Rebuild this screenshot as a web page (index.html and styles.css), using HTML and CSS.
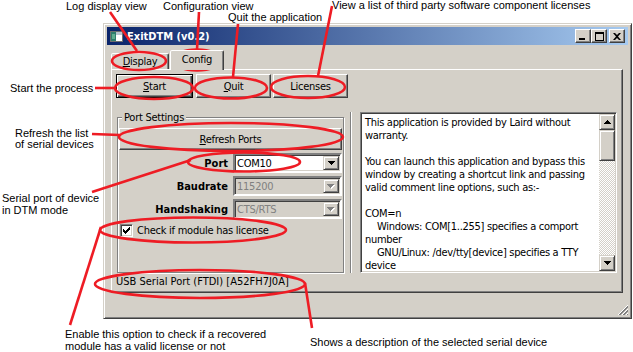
FILE: index.html
```html
<!DOCTYPE html>
<html>
<head>
<meta charset="utf-8">
<title>ExitDTM</title>
<link rel="stylesheet" href="styles.css">
</head>
<body>
<div class="canvas">
  <div class="window">
    <div class="titlebar">
      <svg class="appicon" width="16" height="16" viewBox="0 0 16 16">
        <rect x="1.5" y="3.5" width="12" height="10" fill="#fff" stroke="#6f6f6f"/>
        <rect x="2" y="4" width="5" height="9" fill="#2e7c6b"/>
        <rect x="7" y="4" width="6" height="3" fill="#b8c4d0"/>
        <rect x="3" y="6" width="3" height="5" fill="#5fae8f"/>
      </svg>
      <span class="title">ExitDTM (v0.2)</span>
      <div class="caption-btns">
        <span class="cbtn"><svg width="8" height="8" viewBox="0 0 8 8"><rect x="0" y="6" width="6" height="2"/></svg></span>
        <span class="cbtn"><svg width="9" height="9" viewBox="0 0 9 9"><path fill-rule="evenodd" d="M0 0h9v9H0z M1 2v6h7V2z"/></svg></span>
        <span class="cbtn close"><svg width="8" height="7" viewBox="0 0 8 7"><path d="M0 0h2l2 2 2-2h2L5 3.5 8 7H6L4 5 2 7H0l3-3.5z"/></svg></span>
      </div>
    </div>
    <div class="client">
      <div class="tabs">
        <div class="tab tab-display"><span><u>D</u>isplay</span></div>
        <div class="tab tab-config active"><span>Config</span></div>
      </div>
      <div class="pane">
        <div class="btnrow">
          <div class="btn btn-start default"><span><u>S</u>tart</span></div>
          <div class="btn"><span><u>Q</u>uit</span></div>
          <div class="btn"><span>Licenses</span></div>
        </div>
        <div class="main">
          <div class="group">
            <span class="legend">Port Settings</span>
            <div class="btn refresh"><span><u>R</u>efresh Ports</span></div>
            <div class="form">
              <span class="lbl">Port</span>
              <div class="combo"><span class="val">COM10</span><span class="drop"><svg width="7" height="4" viewBox="0 0 7 4"><path d="M0 0h7v1h-1v1h-1v1h-1v1h-1v-1h-1v-1h-1v-1h-1z"/></svg></span></div>
              <span class="lbl">Baudrate</span>
              <div class="combo disabled"><span class="val">115200</span><span class="drop"><svg width="8" height="5" viewBox="0 0 8 5"><path fill="#fff" d="M1 1h7v1h-1v1h-1v1h-1v1h-1v-1h-1v-1h-1v-1h-1z"/><path fill="#808080" d="M0 0h7v1h-1v1h-1v1h-1v1h-1v-1h-1v-1h-1v-1h-1z"/></svg></span></div>
              <span class="lbl">Handshaking</span>
              <div class="combo disabled"><span class="val">CTS/RTS</span><span class="drop"><svg width="8" height="5" viewBox="0 0 8 5"><path fill="#fff" d="M1 1h7v1h-1v1h-1v1h-1v1h-1v-1h-1v-1h-1v-1h-1z"/><path fill="#808080" d="M0 0h7v1h-1v1h-1v1h-1v1h-1v-1h-1v-1h-1v-1h-1z"/></svg></span></div>
            </div>
            <div class="check">
              <span class="box"><svg width="7" height="7" viewBox="0 0 7 7"><path d="M6 0h1v3h-1v1h-1v1h-1v1h-1v1h-1v-1h-1v-1h-1v-3h1v1h1v1h1v-1h1v-1h1v-1h1z"/></svg></span>
              <span>Check if module has license</span>
            </div>
          </div>
          <div class="splitter"><span class="split-line"></span></div>
          <div class="memo">
            <div class="memo-text">
              <p>This application is provided by Laird without</p>
              <p>warranty.</p>
              <p>&nbsp;</p>
              <p>You can launch this application and bypass this</p>
              <p>window by creating a shortcut link and passing</p>
              <p>valid comment line options, such as:-</p>
              <p>&nbsp;</p>
              <p>COM=n</p>
              <p class="ind">Windows: COM[1..255] specifies a comport</p>
              <p>number</p>
              <p class="ind">GNU/Linux: /dev/tty[device] specifies a TTY</p>
              <p>device</p>
            </div>
            <div class="vscroll">
              <span class="sbtn"><svg width="7" height="4" viewBox="0 0 7 4"><path d="M3 0h1v1h1v1h1v1h1v1h-7v-1h1v-1h1v-1h1z"/></svg></span>
              <span class="thumb"></span>
              <span class="track"></span>
              <span class="sbtn"><svg width="7" height="4" viewBox="0 0 7 4"><path d="M0 0h7v1h-1v1h-1v1h-1v1h-1v-1h-1v-1h-1v-1h-1z"/></svg></span>
            </div>
          </div>
          <div class="status">USB Serial Port (FTDI) [A52FH7J0A]</div>
        </div>
      </div>
    </div>
    <svg class="grip" width="12" height="12" viewBox="0 0 12 12">
      <g stroke-width="1">
        <path d="M11 1L1 11" stroke="#fff"/><path d="M11 2L2 11" stroke="#808080"/><path d="M11 3L3 11" stroke="#808080"/>
        <path d="M11 5L5 11" stroke="#fff"/><path d="M11 6L6 11" stroke="#808080"/><path d="M11 7L7 11" stroke="#808080"/>
        <path d="M11 9L9 11" stroke="#fff"/><path d="M11 10L10 11" stroke="#808080"/>
      </g>
    </svg>
  </div>

  <p class="note n-log">Log display view</p>
  <p class="note n-config">Configuration view</p>
  <p class="note n-quit">Quit the application</p>
  <p class="note n-lic">View a list of third party software component licenses</p>
  <p class="note n-start">Start the process</p>
  <p class="note n-refresh">Refresh the list<br>of serial devices</p>
  <p class="note n-serial">Serial port of device<br>in DTM mode</p>
  <p class="note n-enable">Enable this option to check if a recovered<br>module has a valid license or not</p>
  <p class="note n-shows">Shows a description of the selected serial device</p>

  <svg class="overlay" width="633" height="352" viewBox="0 0 633 352">
    <g fill="none" stroke="#EE1C24" stroke-width="2.6">
      <ellipse cx="139" cy="61" rx="27" ry="9"/>
      <ellipse cx="197" cy="60" rx="24" ry="10.5"/>
      <ellipse cx="154" cy="88" rx="39" ry="11"/>
      <ellipse cx="231" cy="88" rx="36" ry="10.5"/>
      <ellipse cx="308" cy="87" rx="37" ry="11"/>
      <ellipse cx="231" cy="137" rx="112" ry="14"/>
      <ellipse cx="244" cy="162" rx="56" ry="9.5"/>
      <ellipse cx="193" cy="230" rx="93" ry="12.5"/>
      <ellipse cx="200" cy="284" rx="105" ry="14"/>
      <path d="M110 12L137 51"/>
      <path d="M199 12L197 50"/>
      <path d="M238 24L233 77"/>
      <path d="M332 6L318 76"/>
      <path d="M95 88L116 88"/>
      <path d="M92 134L120 135"/>
      <path d="M92 192L191 160"/>
      <path d="M70 325L101 227"/>
      <path d="M305 283L312 328"/>
    </g>
  </svg>
</div>
</body>
</html>
```

FILE: styles.css
```css
* { box-sizing: border-box; }
html, body { margin: 0; padding: 0; background: #fff; }
body { width: 633px; height: 352px; overflow: hidden; font-family: "Liberation Sans", Arial, sans-serif; }

.canvas { position: relative; width: 633px; height: 352px; }

/* ---------- window ---------- */
.window {
  position: absolute; left: 103px; top: 23px; width: 529px; height: 296px;
  background: #D4D0C8;
  border: 1px solid; border-color: #D4D0C8 #404040 #404040 #D4D0C8;
  box-shadow: inset 1px 1px #fff, inset -1px -1px #808080;
  padding: 3px;
  display: flex; flex-direction: column;
  font-family: "DejaVu Sans Condensed", "DejaVu Sans", sans-serif;
  font-size: 11px; color: #000; letter-spacing: -0.25px;
}
.titlebar {
  height: 18px; flex: none;
  background: linear-gradient(to right, #0A246A, #A6CAF0);
  display: flex; align-items: center; padding: 0 3px 0 2px;
}
.appicon { flex: none; margin-right: 2px; }
.title { color: #fff; font-weight: bold; font-size: 11px; white-space: nowrap; letter-spacing: 0; }
.caption-btns { margin-left: auto; display: flex; align-items: center; }
.cbtn {
  width: 16px; height: 14px; background: #D4D0C8;
  border: 1px solid; border-color: #fff #404040 #404040 #fff;
  box-shadow: inset -1px -1px #808080;
  display: flex; align-items: center; justify-content: center;
}
.cbtn svg { fill: #000; }
.cbtn.close { margin-left: 2px; }

.client { flex: 1; display: flex; flex-direction: column; padding: 5px 5px 0 4px; }

/* ---------- tabs ---------- */
.tabs { display: flex; align-items: flex-end; height: 19px; flex: none; }
.tab {
  height: 16px; display: flex; align-items: center; justify-content: center;
  border: 1px solid; border-bottom: 0; border-color: #fff #404040 transparent #fff;
  box-shadow: inset -1px 0 #808080; border-radius: 2px 2px 0 0;
  background: #D4D0C8; white-space: nowrap;
}
.tab-display { width: 58px; }
.tab-config { width: 54px; margin-left: 1px; }
.tab.active { height: 20px; margin-bottom: -1px; padding-bottom: 2px; position: relative; z-index: 1; }

.pane {
  height: 224px; flex: none;
  border: 1px solid; border-color: #fff #404040 #404040 #fff;
  box-shadow: inset -1px -1px #808080;
  padding: 4px 5px 2px 4px;
  display: flex; flex-direction: column;
}

/* ---------- buttons ---------- */
.btnrow { display: flex; gap: 2px; height: 24px; flex: none; }
.btn {
  width: 75px; height: 24px; background: #D4D0C8;
  border: 1px solid; border-color: #fff #404040 #404040 #fff;
  box-shadow: inset -1px -1px #808080;
  display: flex; align-items: center; justify-content: center; white-space: nowrap;
}
.btn.btn-start { width: 77px; margin-right: 1px; }
.btn.default {
  border-color: #000;
  box-shadow: inset 1px 1px #fff, inset -1px -1px #404040, inset -2px -2px #808080;
}

/* ---------- main grid ---------- */
.main {
  flex: 1; margin-top: 14px;
  display: grid; grid-template-columns: 229px 15px 1fr; grid-template-rows: 161px 1fr;
}

.group {
  grid-column: 1; grid-row: 1;
  margin: 5px 0 0 1px; width: 227px; height: 156px;
  border: 1px solid #808080;
  box-shadow: inset 1px 1px #fff, 1px 1px #fff;
  padding: 0 1px;
  display: flex; flex-direction: column;
}
.legend {
  display: block; width: max-content; line-height: 13px;
  margin: -7px 0 0 3px; padding: 0 2px; background: #D4D0C8;
}
.btn.refresh { width: auto; height: 22px; margin-top: 4px; }

.form {
  margin-top: 3px;
  display: grid; grid-template-columns: 1fr 1fr; grid-auto-rows: 20px;
  column-gap: 5px; row-gap: 3px; align-items: center;
}
.lbl { text-align: right; font-weight: bold; white-space: nowrap; letter-spacing: 0; }
.combo {
  height: 20px; display: flex; align-items: stretch;
  border: 2px solid; border-color: #808080 #fff #fff #808080;
  box-shadow: inset 1px 1px #404040, inset -1px -1px #D4D0C8;
  padding: 1px; background: #fff;
}
.combo .val { flex: 1; display: flex; align-items: center; padding-left: 1px; white-space: nowrap; overflow: hidden; }
.combo.disabled { background: #D4D0C8; color: #808080; }
.drop {
  width: 16px; flex: none; background: #D4D0C8;
  border: 1px solid; border-color: #D4D0C8 #404040 #404040 #D4D0C8;
  box-shadow: inset 1px 1px #fff, inset -1px -1px #808080;
  display: flex; align-items: center; justify-content: center;
}
.drop svg { fill: #000; }

.check { display: flex; align-items: center; gap: 4px; margin: 5px 0 0 1px; height: 13px; white-space: nowrap; }
.box {
  width: 13px; height: 13px; flex: none; background: #fff;
  border: 1px solid; border-color: #808080 #fff #fff #808080;
  box-shadow: inset 1px 1px #404040, inset -1px -1px #D4D0C8;
  display: flex; align-items: center; justify-content: center;
}
.box svg { fill: #000; }

.splitter { grid-column: 2; grid-row: 1; display: flex; padding-left: 5px; }
.split-line { width: 2px; height: 100%; border-left: 1px solid #808080; border-right: 1px solid #fff; }

.memo {
  grid-column: 3; grid-row: 1;
  border: 1px solid; border-color: #808080 #fff #fff #808080;
  box-shadow: inset 1px 1px #404040, inset -1px -1px #D4D0C8;
  padding: 1px; background: #fff;
  display: flex; overflow: hidden;
}
.memo-text { flex: 1; padding: 2px 0 0 3px; overflow: hidden; letter-spacing: -0.3px; }
.memo-text p { margin: 0; line-height: 13px; white-space: nowrap; }
.memo-text p.ind { padding-left: 12px; }

.vscroll { width: 16px; flex: none; display: flex; flex-direction: column; }
.sbtn, .thumb {
  background: #D4D0C8;
  border: 1px solid; border-color: #D4D0C8 #404040 #404040 #D4D0C8;
  box-shadow: inset 1px 1px #fff, inset -1px -1px #808080;
  flex: none;
}
.sbtn { height: 16px; display: flex; align-items: center; justify-content: center; }
.sbtn svg { fill: #000; }
.thumb { height: 31px; }
.track { flex: 1; background: repeating-conic-gradient(#D4D0C8 0 25%, #fff 0 50%) 0 0 / 2px 2px; }

.status { grid-column: 1 / span 3; grid-row: 2; display: flex; align-items: center; white-space: nowrap; letter-spacing: 0; }

.grip { position: absolute; right: 2px; bottom: 2px; }

/* ---------- annotations ---------- */
.note {
  position: absolute; margin: 0; color: #000; white-space: nowrap;
  font-family: "Liberation Sans", Arial, sans-serif; font-size: 11px; line-height: 12px;
}
.n-log { left: 66px; top: 0; }
.n-config { left: 163px; top: 0; }
.n-quit { left: 228px; top: 11px; }
.n-lic { left: 332px; top: -1px; }
.n-start { left: 10px; top: 82px; }
.n-refresh { left: 15px; top: 128px; line-height: 11px; }
.n-serial { left: 2px; top: 192px; }
.n-enable { left: 65px; top: 328px; }
.n-shows { left: 310px; top: 336px; }

.overlay { position: absolute; left: 0; top: 0; pointer-events: none; }
```
